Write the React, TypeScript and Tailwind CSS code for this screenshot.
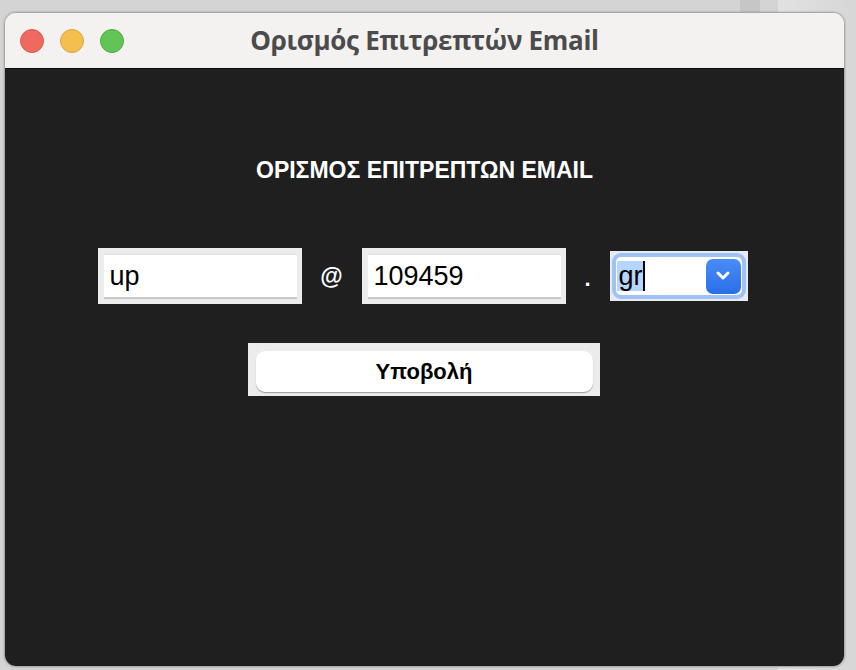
import React from "react";

export default function App() {
  return (
    <div className="w-[856px] h-[670px] bg-[#d4d4d4] relative overflow-hidden" style={{ fontFamily: '"Liberation Sans", Arial, sans-serif' }}>
      <div className="absolute left-[740px] top-0 w-[20px] h-[12px] bg-[#c6c6c6]" />
      <div className="absolute left-[778px] top-0 w-[78px] h-[670px] bg-gradient-to-r from-[#e2e2e2] to-[#d6d6d6]" />
      <div className="absolute left-[4px] top-[12px] w-[841px] h-[655px] rounded-[12px] overflow-hidden border border-[#a9a9a9] flex flex-col shadow-[0_0_2px_rgba(0,0,0,0.3)]">
        <div className="h-[56px] bg-[#f3f2f0] border-b border-[#0c0c0c] flex items-center relative shrink-0">
          <div className="flex items-center gap-[16px] pl-[15px]">
            <div className="w-[24px] h-[24px] rounded-full bg-[#ee6a5f] border border-[#d65a50]" />
            <div className="w-[24px] h-[24px] rounded-full bg-[#f5bf4f] border border-[#d9a73f]" />
            <div className="w-[24px] h-[24px] rounded-full bg-[#61c454] border border-[#52a846]" />
          </div>
          <div className="absolute inset-0 flex items-center justify-center">
            <span className="text-[26px] font-bold text-[#4b4b4b] tracking-[-0.3px]" style={{ fontFamily: '"Open Sans", Inter, sans-serif' }}>
              Ορισμός Επιτρεπτών Email
            </span>
          </div>
        </div>
        <div className="flex-1 bg-[#1f1f1f] flex flex-col items-center pt-[88px]">
          <div className="text-white font-bold text-[23px] leading-[26px]">ΟΡΙΣΜΟΣ ΕΠΙΤΡΕΠΤΩΝ EMAIL</div>
          <div className="flex items-center mt-[65px] h-[56px] mr-[4px]">
            <div className="w-[204px] h-[56px] bg-[#ececec] pl-[6px] pt-[6px] pr-[5px] pb-[5px]">
              <div className="w-full h-full bg-white border-b-2 border-[#c9c9c9] border-t border-t-[#e0e0e0] flex items-center pl-[6px] text-[27px] text-black">up</div>
            </div>
            <div className="w-[60px] flex justify-center text-white text-[23px] font-bold">@</div>
            <div className="w-[204px] h-[56px] bg-[#ececec] pl-[6px] pt-[6px] pr-[5px] pb-[5px]">
              <div className="w-full h-full bg-white border-b-2 border-[#c9c9c9] border-t border-t-[#e0e0e0] flex items-center pl-[6px] text-[27px] text-black">109459</div>
            </div>
            <div className="w-[44px] flex justify-center text-white text-[22px] font-bold pt-[4px]">.</div>
            <div className="w-[138px] h-[50px] bg-[#e6ebf3] p-[2px]">
              <div className="w-full h-full rounded-[9px] border-[4px] border-[#9fc2f5] bg-white flex items-center pl-[1px] pr-[1px]">
                <div className="flex-1 flex items-center">
                  <span className="bg-[#b4d5fe] text-black text-[27px] leading-[30px] pl-[2px]">gr</span>
                  <span className="w-[2px] h-[30px] bg-black" />
                </div>
                <div className="w-[35px] h-[35px] rounded-[7px] bg-gradient-to-b from-[#4a8cf7] to-[#2a6ee8] flex items-center justify-center">
                  <svg width="18" height="12" viewBox="0 0 18 12">
                    <path d="M4 3 L9 8 L14 3" stroke="white" strokeWidth="3" fill="none" strokeLinecap="round" strokeLinejoin="round" />
                  </svg>
                </div>
              </div>
            </div>
          </div>
          <div className="mt-[39px] w-[352px] h-[53px] bg-[#ececec] pl-[8px] pr-[7px] pt-[8px] pb-[4px] mr-[2px]">
            <div className="w-full h-full bg-white rounded-[9px] shadow-[0_1px_1px_rgba(0,0,0,0.35)] flex items-center justify-center text-black font-bold text-[22px]">
              Υποβολή
            </div>
          </div>
        </div>
      </div>
    </div>
  );
}
